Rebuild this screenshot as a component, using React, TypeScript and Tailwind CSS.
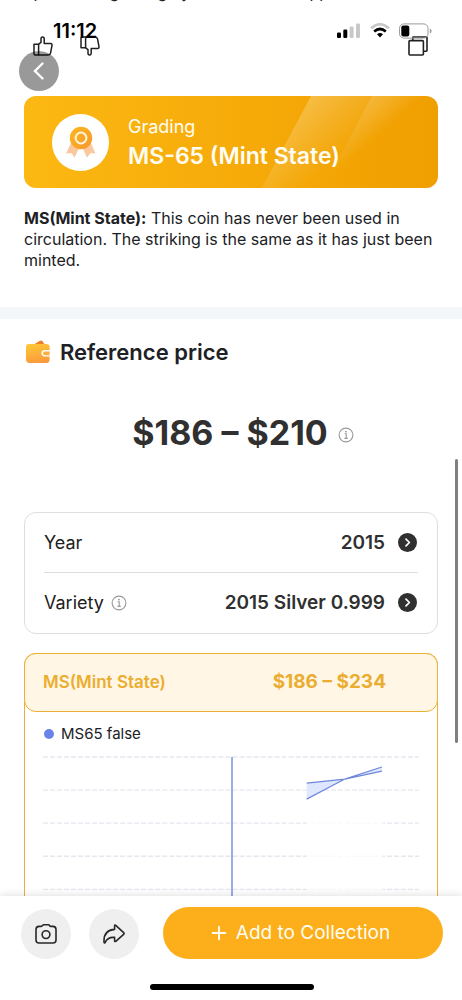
import React from 'react';
import { Plus } from 'lucide-react';

const ThumbIcon: React.FC<{ down?: boolean }> = ({ down = false }) => (
  <svg
    width="20"
    height="20"
    viewBox="0 0 20 20"
    fill="none"
    stroke="#202020"
    strokeWidth="1.5"
    strokeLinejoin="round"
    className={down ? '-scale-y-100' : ''}
  >
    <path d="M1 8.2h4.6V19H2.2Q1 19 1 17.8Z" />
    <path d="M5.6 8.2 8 6.4V3Q8 1 9.6 1T11.2 3V7.4H17.4Q19.3 7.6 19 9.4L17.6 16.8Q17.1 19 15.2 19H5.6" />
  </svg>
);

const CopyIcon = () => (
  <svg width="20" height="20" viewBox="0 0 20 20" fill="none" stroke="#202020" strokeWidth="1.6" strokeLinejoin="round">
    <rect x="1" y="4.6" width="14.4" height="14.4" rx="1" />
    <path d="M4.8 4.6V1.6Q4.8 1 5.4 1H18.4Q19 1 19 1.6V14.6Q19 15.2 18.4 15.2H15.4" />
  </svg>
);

const InfoIcon = () => (
  <svg width="16" height="16" viewBox="0 0 16 16" fill="none" stroke="#999" strokeWidth="1.1">
    <circle cx="8" cy="8" r="6.9" />
    <path d="M6.6 6.8H8.2V11.4M6.4 11.4H9.8" />
    <circle cx="8" cy="4.6" r="0.9" fill="#999" stroke="none" />
  </svg>
);

const ArrowCircle = () => (
  <svg width="19" height="19" viewBox="0 0 19 19" fill="none">
    <circle cx="9.5" cy="9.5" r="9.5" fill="#303030" />
    <path d="M8 6.2 11.4 9.5 8 12.8" stroke="#fff" strokeWidth="1.7" strokeLinecap="round" strokeLinejoin="round" />
  </svg>
);

const MedalIcon = () => (
  <svg width="32" height="32" viewBox="0 0 32 32">
    <defs>
      <linearGradient id="medal" x1="0" y1="0" x2="1" y2="1">
        <stop offset="0" stopColor="#fdb91c" />
        <stop offset="1" stopColor="#f6962e" />
      </linearGradient>
    </defs>
    <path d="M7 15 1 27.5 6.5 27 9.5 31.5 15 20Z" fill="#fbc79c" />
    <path d="M25 15 30.5 27.5 25.5 27 22 31.5 16.5 20Z" fill="#fbc79c" />
    <circle cx="16" cy="12" r="11.2" fill="url(#medal)" />
    <circle cx="16" cy="12" r="5.4" fill="none" stroke="#fff3d8" strokeWidth="2" />
  </svg>
);

const WalletIcon = () => (
  <svg width="26" height="26" viewBox="0 0 26 26">
    <defs>
      <linearGradient id="wallet" x1="0.3" y1="0" x2="0.6" y2="1">
        <stop offset="0" stopColor="#fec637" />
        <stop offset="1" stopColor="#fa993c" />
      </linearGradient>
    </defs>
    <path d="M9 6 16 1.8Q17.4 1 18.4 2.2L21 6Z" fill="#ee7f22" />
    <path d="M5 5H22.4Q25.6 5 25.6 8.2V11H20.8Q17.4 11.2 17.4 14.2T20.8 17.5H25.6V20.6Q25.6 24 22.4 24H5.4Q2 24 2 20.6V8Q2 5 5 5Z" fill="url(#wallet)" />
    <path d="M25.6 12.4V16.2H21.2Q19 16 19 14.3T21.2 12.4Z" fill="#fcae3e" />
  </svg>
);

const StatusBar = () => (
  <div className="absolute inset-x-0 top-5 flex items-start justify-between pr-[30px] pl-[53px]">
    <span className="text-[20px] leading-[22px] font-semibold text-black">11:12</span>
    <div className="flex items-center gap-[9px] pt-[3px]">
      <svg width="24" height="16" viewBox="0 0 24 16">
        <rect x="0" y="9.5" width="4" height="5.5" rx="1.3" fill="#000" />
        <rect x="6.3" y="6.5" width="4" height="8.5" rx="1.3" fill="#000" />
        <rect x="12.6" y="3.5" width="4" height="11.5" rx="1.3" fill="#c8c8c8" />
        <rect x="19" y="0.5" width="4" height="14.5" rx="1.3" fill="#c8c8c8" />
      </svg>
      <svg width="20" height="16" viewBox="0 0 20 16" fill="none">
        <path d="M1 5.2Q10-2.8 19 5.2" stroke="#c8c8c8" strokeWidth="2.6" />
        <path d="M4.2 8.6Q10 3.4 15.8 8.6" stroke="#000" strokeWidth="2.7" />
        <path d="M7 11.2Q10 8.6 13 11.2L10 14.6Z" fill="#000" />
      </svg>
      <svg width="33" height="16" viewBox="0 0 33 16">
        <rect x="0.5" y="0.9" width="28.5" height="14.2" rx="4.4" fill="none" stroke="#9a9a9a" />
        <rect x="2.3" y="2.6" width="8" height="10.8" rx="2" fill="#000" />
        <path d="M30.8 5.4Q32.6 6 32.6 8T30.8 10.6Z" fill="#9a9a9a" />
      </svg>
    </div>
  </div>
);

const GradingBanner = () => (
  <div className="relative flex h-[92px] items-center overflow-hidden rounded-xl bg-linear-to-r from-[#fcb813] to-[#f09f00] px-7">
    <svg className="absolute inset-y-0 right-0" width="180" height="92" viewBox="0 0 180 92">
      <defs>
        <linearGradient id="shine" gradientUnits="userSpaceOnUse" x1="48" y1="0" x2="92" y2="52">
          <stop offset="0" stopColor="#fff" stopOpacity="0.26" />
          <stop offset="1" stopColor="#fff" stopOpacity="0" />
        </linearGradient>
        <linearGradient id="shineSide" gradientUnits="userSpaceOnUse" x1="110" y1="0" x2="134" y2="28">
          <stop offset="0" stopColor="#fff" stopOpacity="0.24" />
          <stop offset="1" stopColor="#fff" stopOpacity="0" />
        </linearGradient>
      </defs>
      <path d="M53 0H114L65 92H4Z" fill="url(#shine)" />
      <path d="M114 0H180V92H65Z" fill="url(#shineSide)" />
    </svg>
    <div className="relative flex size-[57px] items-center justify-center rounded-full bg-white">
      <MedalIcon />
    </div>
    <div className="relative ml-[19px] text-[#fffdf3]">
      <div className="text-lg leading-7">Grading</div>
      <div className="text-[23px] leading-[30px] font-semibold">MS-65 (Mint State)</div>
    </div>
  </div>
);

const PriceChart = () => (
  <svg className="block w-full" viewBox="0 0 375 200" fill="none">
    {[1, 34, 67, 100, 133, 166].map((y) => (
      <line key={y} x1="0" x2="375" y1={y} y2={y} stroke="#e3e7ee" strokeWidth="1.3" strokeDasharray="5 2" />
    ))}
    <rect x="263" y="44" width="76" height="156" fill="#fff" fillOpacity="0.75" />
    <path d="M263 27 301 23 263 43Z" fill="#dfe7fd" />
    <path d="M301 23 338 11V15Z" fill="#dfe7fd" />
    <path d="M263 27 301 23 338 15M263 43 301 23 338 11" stroke="#6f87dc" strokeWidth="1.2" />
    <line x1="188.5" x2="188.5" y1="1" y2="200" stroke="#7389da" strokeWidth="1.4" />
  </svg>
);

const details = [
  { label: 'Year', value: '2015', info: false },
  { label: 'Variety', value: '2015 Silver 0.999', info: true },
];

const App: React.FC = () => {
  return (
    <div className="relative flex h-screen flex-col overflow-hidden bg-white font-['Inter','Liberation_Sans',sans-serif] text-[#202124]">
      <main className="min-h-0 flex-1 overflow-hidden">
        <section className="px-6">
          <p className="-mt-5 h-6 text-base leading-6 whitespace-nowrap">update the grading by the coin scan app</p>
          <div className="mt-[30px] flex h-6 items-center pr-[10px] pl-[9px]">
            <button aria-label="Like"><ThumbIcon /></button>
            <button aria-label="Dislike" className="ml-[27px]"><ThumbIcon down /></button>
            <button aria-label="Copy" className="ml-auto"><CopyIcon /></button>
          </div>
          <div className="mt-[38px]">
            <GradingBanner />
          </div>
          <p className="mt-5 pb-9 text-base leading-[21px]">
            <strong className="font-bold">MS(Mint State):</strong> This coin has never been used in circulation. The
            striking is the same as it has just been minted.
          </p>
        </section>

        <div className="h-3 bg-[#f4f7fa]" />

        <section className="px-6 pt-[18px]">
          <h2 className="flex items-center gap-[10px] text-[22px] leading-[30px] font-semibold">
            <WalletIcon />
            Reference price
          </h2>

          <div className="mt-11 flex h-11 items-center justify-center gap-[10px] pl-6">
            <span className="text-[34px] leading-[44px] font-bold text-[#303030]">$186 – $210</span>
            <button aria-label="About the price" className="pt-1"><InfoIcon /></button>
          </div>

          <div className="mt-[57px] rounded-xl border border-[#dedede] px-[19px]">
            {details.map((row) => (
              <div key={row.label} className="flex h-[60px] items-center border-b border-[#dedede] text-lg last:border-b-0">
                <span className="text-[#202020]">{row.label}</span>
                {row.info && (
                  <button aria-label="About the variety" className="ml-[7px]"><InfoIcon /></button>
                )}
                <button className="ml-auto flex items-center gap-[13px] pr-px text-[19px] font-semibold text-[#303030]">
                  {row.value}
                  <ArrowCircle />
                </button>
              </div>
            ))}
          </div>

          <div className="mt-[19px] rounded-t-xl border border-b-0 border-[#ebb136]">
            <div className="-mx-px -mt-px flex h-[59px] items-center justify-between rounded-xl border border-[#ebb136] bg-[#fff6e5] pr-[51px] pl-[18px] font-semibold text-[#ebad2f]">
              <span className="text-[17px]">MS(Mint State)</span>
              <span className="text-[19px] font-bold">$186 – $234</span>
            </div>
            <div className="flex h-11 items-center gap-[7px] px-[19px] text-[15px]">
              <span className="size-2.5 rounded-full bg-[#6984e9]" />
              MS65 false
            </div>
            <div className="px-[18px]">
              <PriceChart />
            </div>
          </div>
        </section>
      </main>

      <footer className="relative bg-white pt-[11px] pr-[19px] pb-[10px] pl-[21px] shadow-[0_-1px_8px_rgba(0,0,0,0.12)]">
        <div className="flex items-end">
          <button aria-label="Take a photo" className="flex size-[50px] items-center justify-center rounded-full bg-[#efefef]">
            <svg width="22" height="22" viewBox="0 0 22 22" fill="none" stroke="#282828" strokeWidth="1.6" strokeLinejoin="round">
              <path d="M4 3.4H6.2Q7 3.4 7.4 2.7T8.6 1.8H13.4Q14.2 1.8 14.6 2.6T15.8 3.4H18Q21 3.6 21 6.6V17Q21 20 18 20H4Q1 20 1 17V6.6Q1 3.6 4 3.4Z" />
              <circle cx="11" cy="11.6" r="3.9" />
            </svg>
          </button>
          <button aria-label="Share" className="ml-[18px] flex size-[50px] items-center justify-center rounded-full bg-[#efefef]">
            <svg width="22" height="20" viewBox="0 0 22 20" fill="none" stroke="#282828" strokeWidth="1.6" strokeLinejoin="round">
              <path d="M11.6 1.8Q11.7.6 12.8 1.3L20.6 8.6Q21.6 9.6 20.6 10.4L12.8 17.3Q11.6 18 11.6 16.8V13.4Q4.4 12.8 2.2 18.4Q1.2 19.6 1 18.2C.6 10 4.8 5.8 11.6 5.4Z" />
            </svg>
          </button>
          <button className="ml-6 flex h-[52px] flex-1 items-center justify-center gap-1.5 rounded-full bg-[#fcae1b] pr-2 text-[19px] text-[#fffdf0]">
            <Plus size={22} strokeWidth={2} />
            Add to Collection
          </button>
        </div>
        <div className="mx-auto mt-[25px] h-1.5 w-[164px] rounded-full bg-black" />
      </footer>

      <StatusBar />
      <button aria-label="Back" className="absolute top-[51px] left-[19px] flex size-10 items-center justify-center rounded-full bg-black/40">
        <svg width="20" height="20" viewBox="0 0 20 20" fill="none" stroke="#fff" strokeWidth="2.4" strokeLinecap="round">
          <path d="M13.5 2.5 6 10l7.5 7.5" />
        </svg>
      </button>
      <div className="absolute top-[459px] right-1 h-[284px] w-[3px] rounded-full bg-[#808080]" />
    </div>
  );
};

export default App;
